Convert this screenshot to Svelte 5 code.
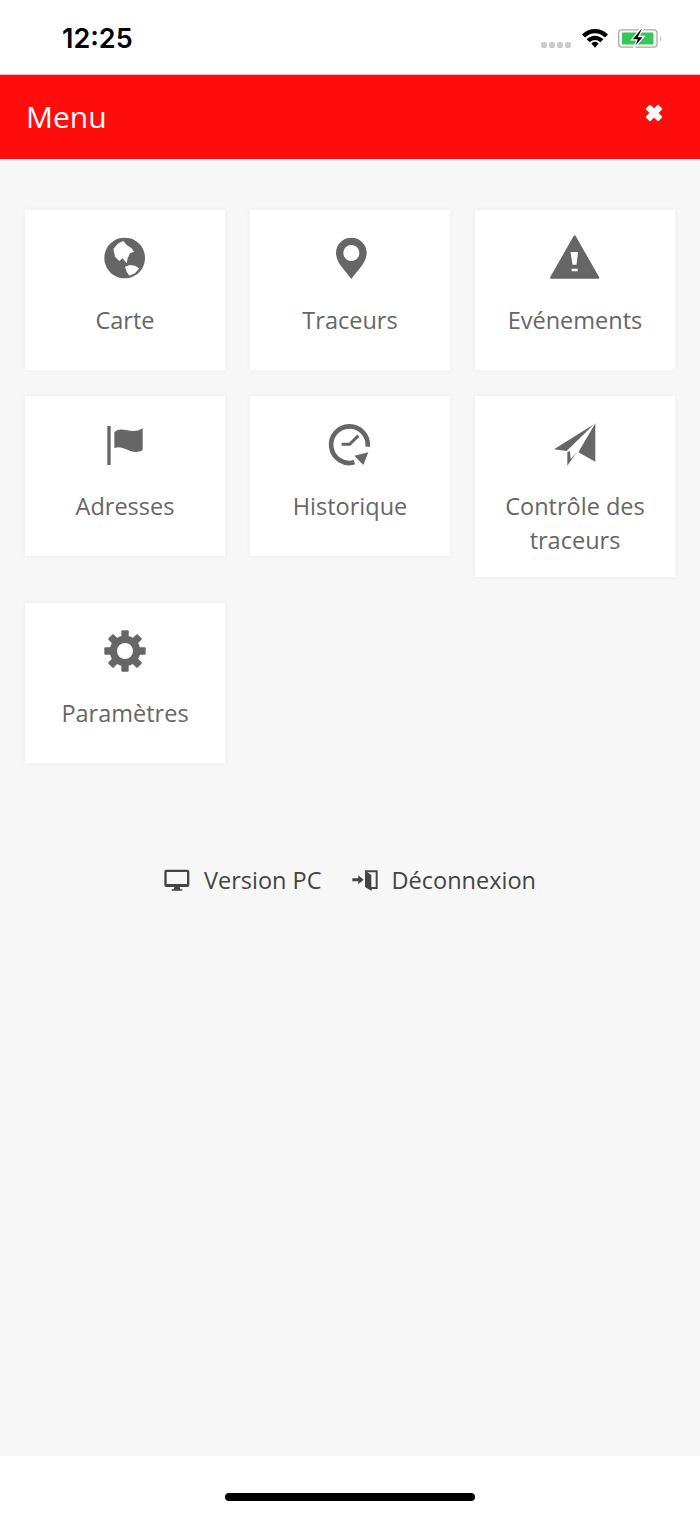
<script>
  const teeth = [0, 45, 90, 135, 180, 225, 270, 315];
</script>

{#snippet label(text)}
  <span class="tile-label">{text}</span>
{/snippet}

<div class="page">
  <div class="status">
    <span class="time">12:25</span>
    <div class="status-icons">
      <div class="dots"><i></i><i></i><i></i><i></i></div>
      <svg class="wifi" viewBox="155 42 78 56">
        <path d="M155 58 C178 36 210 36 233 58 L224 67 C206 50 182 50 164 67Z" />
        <path d="M169 72 C184 58 204 58 219 72 L210 81 C200 72 188 72 178 81Z" />
        <path d="M183 85 C190 78 198 78 205 85 L194 98Z" />
      </svg>
      <svg class="battery" viewBox="265 42 136 56">
        <rect x="267" y="44" width="116" height="52" rx="10" fill="none" stroke="#a8a8a8" stroke-width="4" />
        <rect x="277" y="52" width="95" height="36" rx="3" fill="#34c759" />
        <path d="M393 60 q6 10 0 20z" fill="#a8a8a8" />
        <path d="M334 40 L306 74 H322 L312 100 L344 64 H328 L340 40Z" fill="#000" stroke="#fff" stroke-width="4" />
      </svg>
    </div>
  </div>

  <header class="topbar">
    <span class="topbar-title">Menu</span>
    <svg class="close" viewBox="0 0 20 20">
      <path d="M3 6 L6 3 L10 7 L14 3 L17 6 L13 10 L17 14 L14 17 L10 13 L6 17 L3 14 L7 10Z" stroke="#fff" stroke-width="2.4" stroke-linejoin="round" />
    </svg>
  </header>

  <main class="content">
    <div class="grid">
      <a class="tile">
        <svg class="icon" viewBox="60 24 150 150">
          <path fill-rule="evenodd" d="M134 38 a61 61 0 1 0 .01 0Z M100 72 L115 55 L130 48 L140 60 L155 70 L162 80 L150 85 L143 100 L140 115 L128 100 L118 108 L105 95Z M135 125 L150 120 L165 122 L178 130 L165 145 L148 152 L140 140Z" />
        </svg>
        {@render label("Carte")}
      </a>
      <a class="tile">
        <svg class="icon" viewBox="75 24 150 150">
          <path fill-rule="evenodd" d="M154 38 a46 46 0 0 1 46 46 c0 30 -30 55 -46 78 c-16 -23 -46 -48 -46 -78 a46 46 0 0 1 46 -46Z M154 60 a24 24 0 1 0 .01 0Z" />
        </svg>
        {@render label("Traceurs")}
      </a>
      <a class="tile">
        <svg class="icon" viewBox="750 24 150 150">
          <path fill-rule="evenodd" stroke="#666" stroke-width="6" stroke-linejoin="round" d="M824 34 L753 158 H895Z M808 78 H838 L832 122 H815Z M812 128 H836 V142 H812Z" />
        </svg>
        {@render label("Evénements")}
      </a>
      <a class="tile">
        <svg class="icon" viewBox="30 12 150 150">
          <rect x="52" y="33" width="10" height="117" />
          <path d="M73 52 C95 30 125 62 158 40 V105 C125 125 98 85 73 100Z" />
        </svg>
        {@render label("Adresses")}
      </a>
      <a class="tile">
        <svg class="icon" viewBox="30 12 150 150">
          <path d="M158 95 A55 55 0 1 0 118 142" fill="none" stroke="#666" stroke-width="14" />
          <path d="M160 112 L118 122 L145 150Z" />
          <path d="M80 88 H104 L130 62" fill="none" stroke="#666" stroke-width="9" />
        </svg>
        {@render label("Historique")}
      </a>
      <a class="tile">
        <svg class="icon" viewBox="30 12 150 150">
          <path d="M42 103 L162 28 L80 108Z" />
          <path d="M166 25 V140 L115 112Z" />
          <path d="M82 112 L90 108 L92 132 L110 112 L82 152Z" />
        </svg>
        {@render label("Contrôle des traceurs")}
      </a>
      <a class="tile">
        <svg class="icon" viewBox="30 12 150 150">
          <circle cx="105" cy="87" r="35" fill="none" stroke="#666" stroke-width="22" />
          {#each teeth as a}
            <rect x="94" y="25" width="22" height="24" rx="3" transform="rotate({a} 105 87)" />
          {/each}
        </svg>
        {@render label("Paramètres")}
      </a>
    </div>

    <nav class="links">
      <a class="link">
        <svg class="link-icon" viewBox="38 38 76 66">
          <path fill-rule="evenodd" d="M44 40 H107 a6 6 0 0 1 6 6 V86 a6 6 0 0 1 -6 6 H84 L86 99 H92 V103 H60 V99 H66 L68 92 H44 a6 6 0 0 1 -6 -6 V46 a6 6 0 0 1 6 -6Z M45 47 V83 H106 V47Z" />
        </svg>
        <span>Version PC</span>
      </a>
      <a class="link">
        <svg class="link-icon" viewBox="600 36 76 66">
          <path d="M600 64 H618 V55 L634 68 L618 82 V73 H600Z" />
          <path fill-rule="evenodd" d="M638 40 H676 V96 H658 V102 L638 90Z M645 46 L657 54 V90 H670 V46Z" />
        </svg>
        <span>Déconnexion</span>
      </a>
    </nav>
  </main>

  <div class="home-area"><div class="home-bar"></div></div>
</div>

<style>
  :global(body) {
    margin: 0;
    background: #f7f7f7;
  }

  .page {
    display: flex;
    flex-direction: column;
    height: 1515px;
    font-family: "Open Sans", sans-serif;
  }

  .status {
    height: 74px;
    flex-shrink: 0;
    box-sizing: content-box;
    border-bottom: 1px solid #ffb0b0;
    background: #fff;
    display: flex;
    align-items: flex-start;
    justify-content: space-between;
    padding: 0 37px 0 62px;
  }

  .time {
    font-family: Inter, sans-serif;
    font-size: 27px;
    font-weight: 600;
    line-height: 33px;
    margin-top: 22px;
    color: #000;
  }

  .status-icons {
    display: flex;
    align-items: flex-start;
    margin-top: 29px;
  }

  .dots {
    display: flex;
    gap: 2px;
    margin: 13px 11px 0 0;
  }

  .dots i {
    width: 6px;
    height: 6px;
    border-radius: 2px;
    background: #cacaca;
  }

  .wifi {
    width: 26px;
    height: 19px;
    margin-right: 10px;
  }

  .battery {
    width: 45px;
    height: 19px;
  }

  .topbar {
    height: 84px;
    flex-shrink: 0;
    background: #ff0d0d;
    color: #fff;
    display: flex;
    align-items: center;
    justify-content: space-between;
    padding: 0 36px 0 26px;
  }

  .topbar-title {
    font-size: 30px;
    line-height: 84px;
  }

  .close {
    width: 20px;
    height: 20px;
    fill: #fff;
    margin-bottom: 8px;
  }

  .content {
    flex: 1;
    padding: 51px 25px 0;
  }

  .grid {
    display: grid;
    grid-template-columns: repeat(3, 200px);
    gap: 26px 25px;
    align-items: start;
  }

  .tile {
    background: #fff;
    box-shadow: 0 0 6px rgba(0, 0, 0, 0.05);
    padding: 23px 20px 20px;
    min-height: 117px;
    display: flex;
    flex-direction: column;
    align-items: center;
    text-align: center;
    color: #666;
  }

  .icon {
    width: 50px;
    height: 50px;
    fill: #666;
    flex-shrink: 0;
  }

  .tile-label {
    font-size: 23.5px;
    line-height: 34px;
    margin-top: 20px;
  }

  .links {
    display: flex;
    justify-content: center;
    gap: 30px;
    margin-top: 100px;
    font-size: 23.5px;
    line-height: 34px;
    color: #444;
  }

  .link {
    display: flex;
    align-items: center;
    gap: 14px;
  }

  .link-icon {
    width: 26px;
    height: 22px;
    fill: #444;
  }

  .home-area {
    height: 59px;
    flex-shrink: 0;
    background: #fff;
    display: flex;
    justify-content: center;
  }

  .home-bar {
    width: 250px;
    height: 8px;
    margin-top: 37px;
    border-radius: 4px;
    background: #000;
  }
</style>
